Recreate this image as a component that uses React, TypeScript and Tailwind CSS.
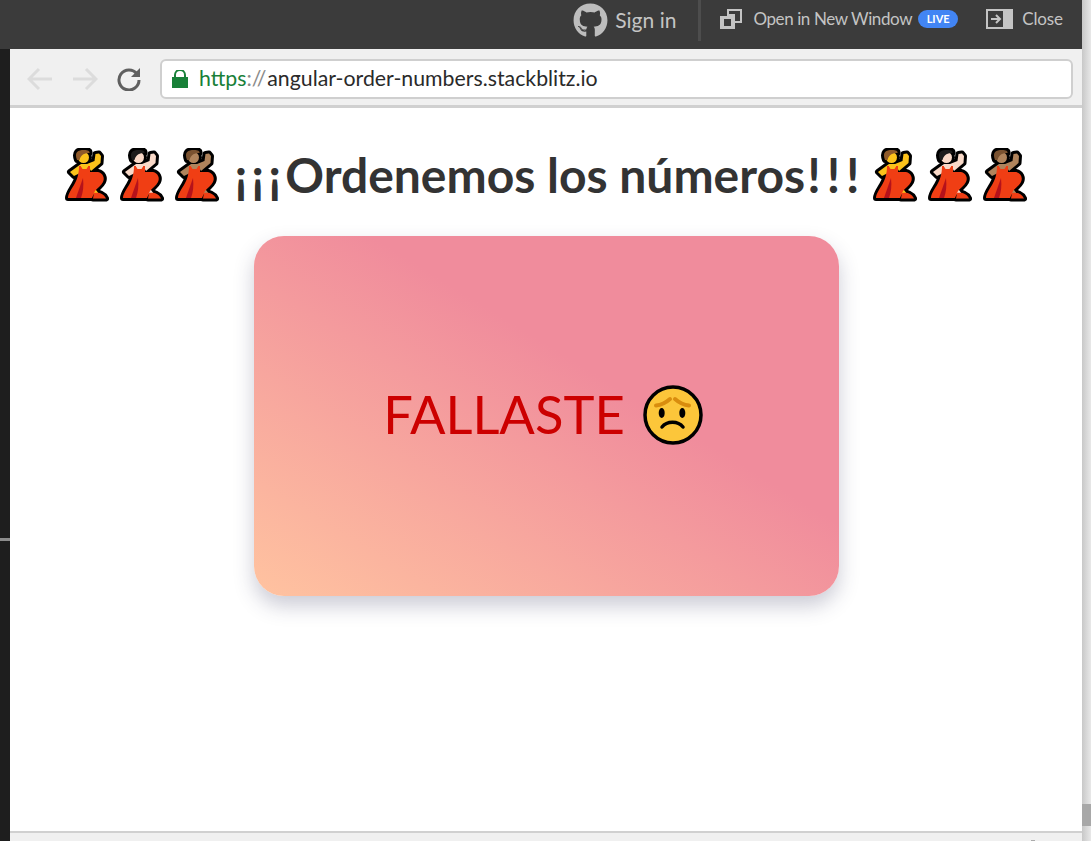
import { FaGithub } from "react-icons/fa";

const LATO = "font-['Lato','Open_Sans',sans-serif]";

// skin / hair variants of the dancer emoji
const dancers = [
  { skin: "#fcc21b", hair: "#8f5a2a" },
  { skin: "#f9d9c8", hair: "#1c1c1c" },
  { skin: "#b0845c", hair: "#7a5230" },
];

function Dancer({ skin, hair }: { skin: string; hair: string }) {
  const dress = "M14 18 L25 18 L25 24 L33 24 C38 25 40 30 38 34 C36 38 32 40 30 43 C29 45 28 48 27 50 L3 50 C3 46 6 42 9 37 C12 32 14 26 14 18Z";
  const foot = "M29 45 C34 44 39 46 41 50.5 L28 50.5Z";
  const shapes = (
    <>
      <path d="M16 16 L5 24 L9 28 L17 24Z" fill={skin} />
      <path d="M22 16 L29.5 13 L30.5 6 L34 5.5 L36 8 L35.5 15 L26 23Z" fill={skin} />
      <path d="M28 38 L34 46 L30 48 L26 43Z" fill={skin} />
      <circle cx="18.5" cy="9.5" r="5.5" fill={skin} />
      <path d={dress} fill="#f03e14" />
      <path d={foot} fill="#f03e14" />
    </>
  );
  return (
    <svg width="44" height="54" viewBox="0 0 44 54" className="shrink-0">
      <g stroke="#000" strokeWidth="6" strokeLinejoin="round">
        {shapes}
        <path d="M12 12 C9 4 13 2 19 2 C23 2 25 3 24.5 5 L14 12Z" fill="#000" />
      </g>
      {shapes}
      <path d="M12 12 C9 4 13 2 19 2 C23 2 25 3 24.5 5 C20 5 16 6 14.5 12Z" fill={hair} />
      <path d="M16 16 H23 V18.5 L21.5 21 H17.5 L16 18.5Z" fill={skin} />
      <path d="M18 30 L12 47 L11 50 L16 50 C18 44 19 38 18 30Z" fill="#b5121b" />
    </svg>
  );
}

function SadFace() {
  return (
    <svg width="60" height="60" viewBox="0 0 60 60" className="shrink-0">
      <circle cx="30" cy="30" r="28" fill="#fcc63a" stroke="#000" strokeWidth="3.5" />
      <path d="M13 20.5 C18 20 23 17.5 27 14 M46 20.5 C41 20 36 17.5 32 14" fill="none" stroke="#d98d0e" strokeWidth="4" strokeLinecap="round" />
      <ellipse cx="18.7" cy="28" rx="3" ry="5" fill="#000" />
      <ellipse cx="39.3" cy="28" rx="3" ry="5" fill="#000" />
      <path d="M19 42 C24 35.5 35 35.5 40 42" fill="none" stroke="#000" strokeWidth="3.5" strokeLinecap="round" />
    </svg>
  );
}

function DancerRow() {
  return (
    <div className="flex gap-[11px]">
      {dancers.map((d) => (
        <Dancer key={d.skin} {...d} />
      ))}
    </div>
  );
}

export default function App() {
  return (
    <div className={`${LATO} relative flex h-[841px] w-[1091px] overflow-hidden bg-white`}>
      <div className="flex h-full w-[1082px] flex-col">
        {/* stackblitz preview header */}
        <header className="flex h-[49px] shrink-0 items-start bg-[#3b3b3b] text-[#c4c4c4]">
          <div className="ml-auto flex h-[41px] items-center border-r-[3px] border-[#4d4d4d] pr-[22px]">
            <FaGithub className="mr-[7px] text-[35px] text-[#bdbdbd]" />
            <span className="pb-[1px] text-[21px]">Sign in</span>
          </div>
          <div className="flex h-[38px] items-center pl-[19px] pr-[19px]">
            <svg width="22" height="22" viewBox="0 0 22 22" className="mr-[11px]">
              <path d="M7 1 H22 V15 H15 V8 H7Z" fill="#c4c4c4" />
              <path d="M0 8 H15 V21 H0Z M4 11 V18 H11 V11Z" fill="#c4c4c4" fillRule="evenodd" />
              <path d="M9 3 H20 V13 H15 V6 H9Z" fill="#3b3b3b" />
            </svg>
            <span className="text-[17px] tracking-[-0.4px]">Open in New Window</span>
            <span className="ml-[6px] flex h-[18px] w-[40px] items-center justify-center rounded-full bg-[#4285f4] text-[11px] font-bold text-white">
              LIVE
            </span>
            <svg width="27" height="20" viewBox="0 0 27 20" className="ml-[28px] mr-[9px]">
              <path d="M0 0 H27 V20 H0Z M2 2 V18 H17 V2Z" fill="#c4c4c4" fillRule="evenodd" />
              <path d="M5 10 H14 M10 6 L14 10 L10 14" fill="none" stroke="#c4c4c4" strokeWidth="2" />
            </svg>
            <span className="text-[17px] tracking-[-0.1px]">Close</span>
          </div>
        </header>

        <div className="flex min-h-0 flex-1">
          {/* dark editor edge */}
          <div className="flex w-[10px] shrink-0 flex-col bg-[#1e1e1e]">
            <div className="mt-[489px] h-[3px] bg-[#8c8c8c]" />
          </div>

          <div className="flex min-w-0 flex-1 flex-col">
            {/* fake browser toolbar */}
            <div className="flex h-[59px] shrink-0 items-center border-b-[3px] border-[#d0d0d0] bg-[#f0f0f0] pt-[4px]">
              <svg width="26" height="24" viewBox="0 0 26 24" className="ml-[17px]" fill="none" stroke="#dcdcdc" strokeWidth="3">
                <path d="M25 12 H3 M12 2 L2 12 L12 22" />
              </svg>
              <svg width="26" height="24" viewBox="0 0 26 24" className="ml-[19px]" fill="none" stroke="#dcdcdc" strokeWidth="3">
                <path d="M1 12 H23 M14 2 L24 12 L14 22" />
              </svg>
              <svg width="24" height="24" viewBox="0 0 24 24" className="ml-[19px]" fill="none">
                <path d="M20 7 A10 10 0 1 0 22 13" stroke="#5f5f5f" strokeWidth="3" />
                <path d="M23 1 V10 H14Z" fill="#5f5f5f" />
              </svg>
              <div className="ml-[19px] flex h-[40px] w-[913px] items-center rounded-[6px] border-2 border-[#cfcfcf] bg-white pl-[10px] text-[21.3px]">
                <svg width="16" height="18" viewBox="0 0 16 18" className="mr-[11px]">
                  <path d="M3 8 V5 A5 5 0 0 1 13 5 V8" fill="none" stroke="#188038" strokeWidth="2" />
                  <path d="M0 7 H16 V18 H0Z" fill="#188038" />
                </svg>
                <span className="text-[#188038]">https</span>
                <span className="pr-[1px] text-[#8a8a8a]">://</span>
                <span className="text-[#2a2a2a]">angular-order-numbers.stackblitz.io</span>
              </div>
            </div>

            {/* preview page */}
            <main className="flex min-h-0 flex-1 flex-col items-center bg-white">
              <div className="mt-[37px] flex h-[60px] items-center">
                <DancerRow />
                <h1 className="ml-[15px] mr-[7px] text-[48px] font-bold text-[#333333]">
                  <span className="tracking-[4px]">¡¡¡</span>Ordenemos los números<span className="ml-[2px] tracking-[6px]">!!!</span>
                </h1>
                <DancerRow />
              </div>
              <div className="mt-[31px] flex h-[360px] w-[585px] items-center justify-center gap-[18px] rounded-[30px] bg-[linear-gradient(to_top_right,#ffc3a0_0%,#f08c9c_60%,#f08c9c_100%)] pb-[3px] pr-[6px] shadow-[0_10px_20px_rgba(50,50,93,0.25)]">
                <span className="text-[52.5px] text-[#cc0000]">FALLASTE</span>
                <SadFace />
              </div>
              <div className="mt-auto flex h-[10px] w-full items-end justify-end border-t-2 border-[#d0d0d0] bg-[#f0f0f0] pr-[47px]">
                <div className="h-[1px] w-[4px] bg-[#aaaaaa]" />
              </div>
            </main>
          </div>
        </div>
      </div>

      {/* page scrollbar */}
      <div className="flex w-[9px] flex-col bg-gradient-to-r from-[#c8c8c8] to-[#e8e8e8]">
        <div className="mt-[804px] h-[22px] bg-[#a8a8a8]" />
      </div>
    </div>
  );
}
